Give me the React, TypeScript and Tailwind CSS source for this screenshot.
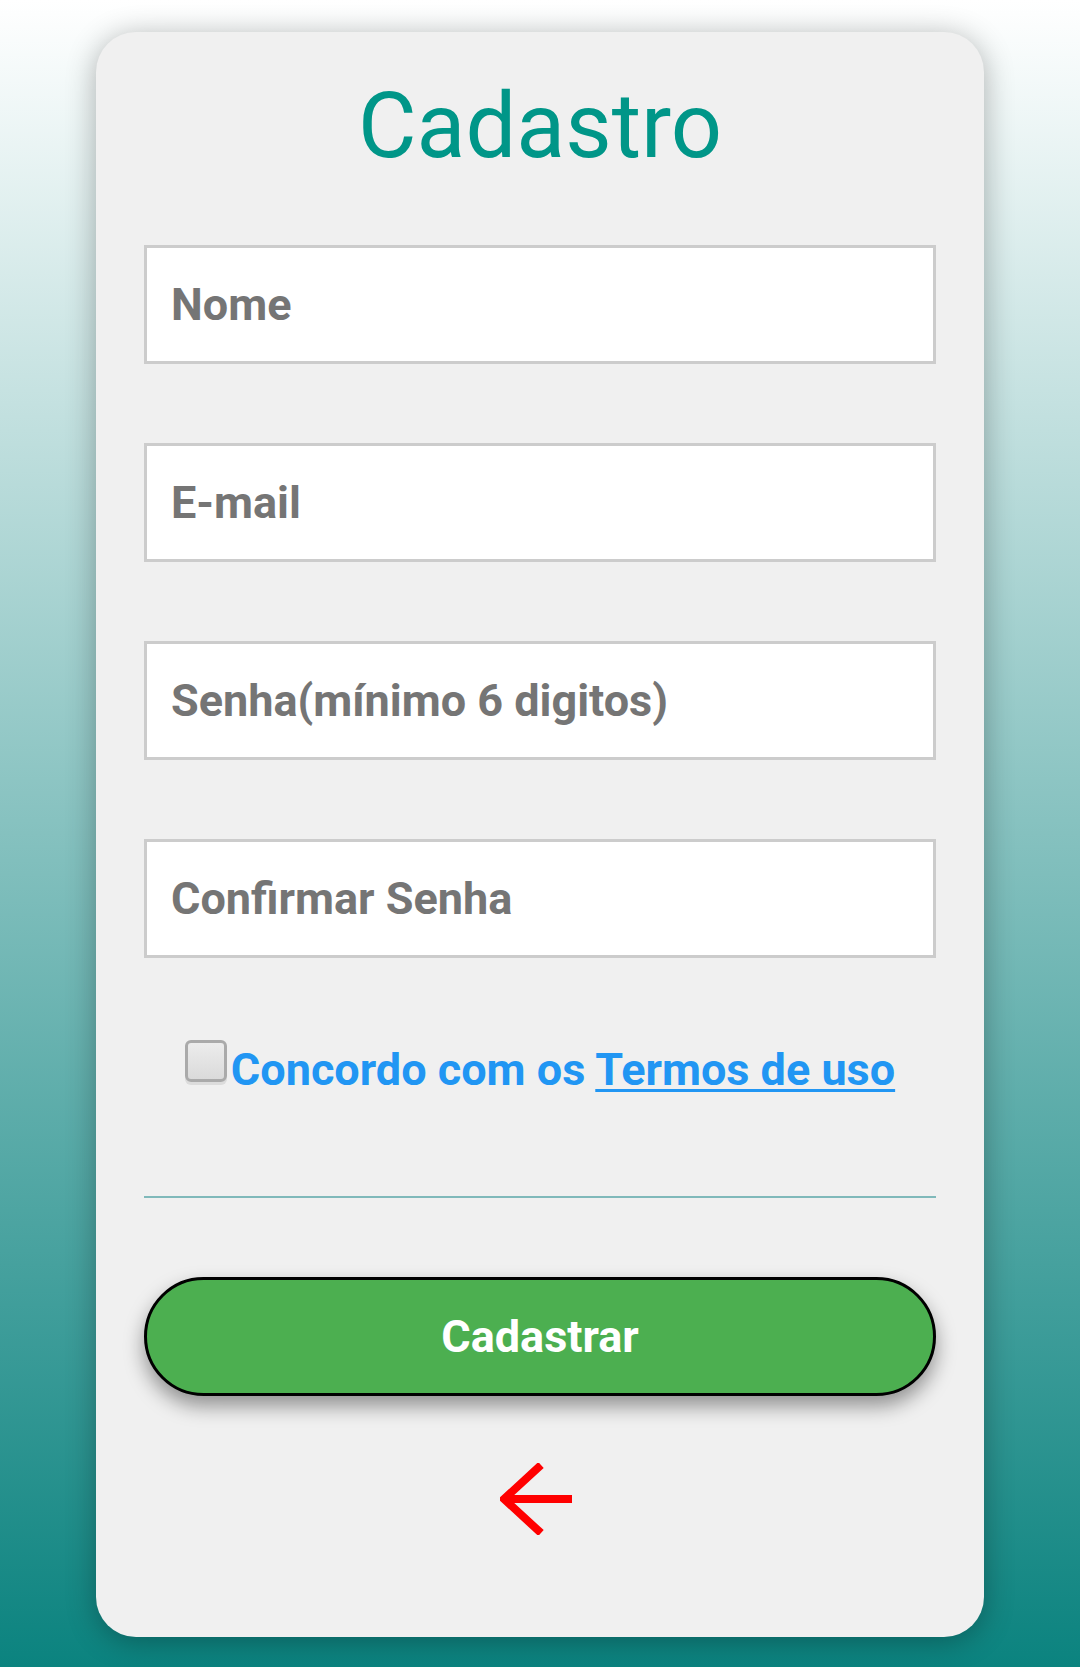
import { useState } from "react";

export default function App() {
  const [agree, setAgree] = useState(false);

  return (
    <div className="h-screen bg-[linear-gradient(to_bottom,#ffffff,#0b837f)] pt-[32px] font-['Roboto',sans-serif]">
      {/* Card */}
      <div className="mx-auto w-[888px] rounded-[40px] bg-[#f0f0f0] px-12 pt-[42px] pb-[102px] shadow-[0_4px_30px_rgba(0,0,0,0.3)]">
        <h1 className="text-center text-[90px] font-normal leading-[106px] text-[#009688]">
          Cadastro
        </h1>

        <form className="mt-[65px] flex flex-col gap-[79px]">
          {["Nome", "E-mail", "Senha(mínimo 6 digitos)", "Confirmar Senha"].map((p) => (
            <input
              key={p}
              type="text"
              placeholder={p}
              className="h-[119px] w-full border-[3px] border-[#cccccc] bg-white px-[24px] text-[45px] font-bold text-[#757575] outline-none placeholder:text-[#757575]"
            />
          ))}
        </form>

        {/* Terms */}
        <div className="mt-[82px] flex justify-center">
          <button
            type="button"
            onClick={() => setAgree(!agree)}
            className="h-[42px] w-[42px] shrink-0 rounded-[6px] border-[3px] border-[#aaaaaa] bg-gradient-to-b from-[#ececec] to-[#dadada] shadow-[0_3px_0_#dcdcdc]"
          >
            {agree && <span className="block text-[28px] leading-none text-[#555]">✓</span>}
          </button>
          <span className="mt-[3px] ml-[4px] text-[45px] font-bold leading-[53px] text-[#2196f3]">
            Concordo com os{" "}
            <a href="#" className="underline decoration-[3px] underline-offset-[4px]">
              Termos de uso
            </a>
          </span>
        </div>

        <div className="mt-[100px] h-[2px] bg-[#80b9ba]" />

        <button
          type="button"
          className="mt-[79px] h-[119px] w-full rounded-[60px] border-[3px] border-black bg-[#4caf50] text-[45px] font-bold text-white shadow-[0_10px_20px_rgba(0,0,0,0.4)]"
        >
          Cadastrar
        </button>

        {/* Back arrow */}
        <div className="mt-[67px] flex justify-center">
          <svg width="72" height="72" viewBox="0 0 72 72" className="ml-[-8px]">
            <path d="M72 36H4" stroke="#ff0000" strokeWidth="8" fill="none" />
            <path d="M41 2L4 36L41 70" stroke="#ff0000" strokeWidth="8" fill="none" strokeLinejoin="miter" />
          </svg>
        </div>
      </div>
    </div>
  );
}
